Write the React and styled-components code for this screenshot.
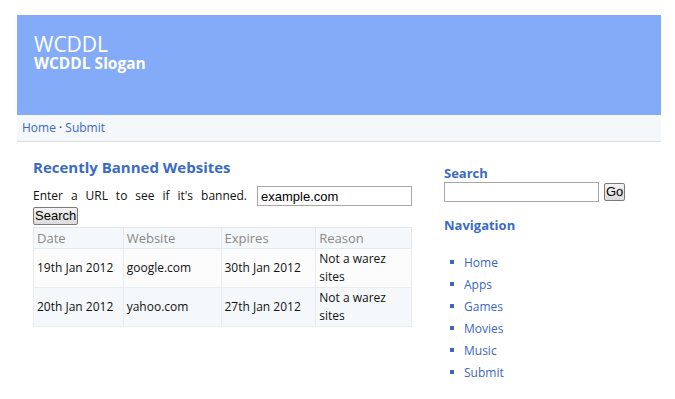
import React from "react";
import styled, { createGlobalStyle } from "styled-components";

const Global = createGlobalStyle`
  html, body { margin: 0; padding: 0; background: #fff; }
  body { font-family: "Open Sans", "DejaVu Sans", sans-serif; color: #111; }
`;

const Page = styled.div`
  width: 644px;
  margin: 15px 0 0 17px;
`;

const Header = styled.header`
  height: 100px;
  box-sizing: border-box;
  background: #84abf7;
  padding: 18px 17px;
  color: #fff;
`;

const Title = styled.h1`
  margin: 0;
  font-size: 21px;
  line-height: 22px;
  font-weight: 400;
`;

const Slogan = styled.h2`
  margin: 0;
  font-size: 15.5px;
  line-height: 17px;
  font-weight: 700;
`;

const TopNav = styled.nav`
  height: 27px;
  box-sizing: border-box;
  background: #f5f8fb;
  border-bottom: 1px solid #dddddd;
  padding: 6px 5px;
  font-size: 12px;
  line-height: 14px;
  color: #222;
`;

const Link = styled.a`
  color: #3a67c2;
  text-decoration: none;
`;

const Content = styled.div`
  display: flex;
  padding: 16px 0 0 16px;
`;

const Main = styled.main`
  width: 379px;
`;

const Side = styled.aside`
  margin-left: 32px;
  width: 190px;
  padding-top: 7px;
`;

const MainTitle = styled.h2`
  margin: 0 0 10px;
  font-size: 15px;
  line-height: 18px;
  font-weight: 700;
  color: #3a6bc4;
`;

const SideTitle = styled.h3`
  margin: 0;
  font-size: 13px;
  line-height: 16px;
  font-weight: 700;
  color: #3a6bc4;
`;

const Form = styled.form`
  font-size: 12px;
  line-height: 20px;
`;

const FormRow = styled.div`
  display: flex;
  align-items: center;
  height: 20px;
`;

const Lead = styled.span`
  flex: 1;
  white-space: nowrap;
  text-align: justify;
  text-align-last: justify;
  margin-right: 10px;
`;

const TextInput = styled.input`
  box-sizing: border-box;
  width: ${(p) => p.$w}px;
  height: 20px;
  border: 1px solid #a7a7a7;
  padding: 0 3px;
  font-family: "Liberation Sans", Arial, sans-serif;
  font-size: 13px;
  color: #000;
  background: #fff;
  outline: none;
`;

const Button = styled.button`
  display: block;
  box-sizing: border-box;
  height: 18px;
  margin-top: ${(p) => p.$mt || 0}px;
  padding: 0 1px;
  font-family: "Liberation Sans", Arial, sans-serif;
  font-size: 13px;
  line-height: 14px;
  color: #000;
  background: linear-gradient(#f2f2f2, #dcdcdc);
  border: 1px solid #7a7a7a;
  border-radius: 2px;
`;

const Table = styled.table`
  margin-top: 2px;
  width: 379px;
  border-collapse: collapse;
  font-size: 12px;
  line-height: 18px;
`;

const Th = styled.th`
  text-align: left;
  font-weight: 400;
  font-size: 13px;
  color: #888;
  background: #f5f8fb;
  border: 1px solid #e3e8ee;
  height: 20px;
  padding: 0 3px;
`;

const Td = styled.td`
  border: 1px solid #e8ecf0;
  padding: 1px 3px;
  height: 37px;
  box-sizing: border-box;
  vertical-align: middle;
`;

const Tr = styled.tr`
  background: ${(p) => (p.$alt ? "#f5f8fb" : "#fcfcfc")};
`;

const SearchRow = styled.div`
  display: flex;
  align-items: center;
  gap: 5px;
  margin: 1px 0 15px;
`;

const NavList = styled.ul`
  margin: 18px 0 0;
  padding: 0 0 0 6px;
  list-style: none;
`;

const NavItem = styled.li`
  display: flex;
  align-items: center;
  height: 22px;
  font-size: 12px;
  &::before {
    content: "";
    width: 4px;
    height: 4px;
    background: #3a67c2;
    margin-right: 10px;
  }
`;

const rows = [
  ["19th Jan 2012", "google.com", "30th Jan 2012", "Not a warez sites"],
  ["20th Jan 2012", "yahoo.com", "27th Jan 2012", "Not a warez sites"],
];

export default function App() {
  return (
    <>
      <Global />
      <Page>
        <Header>
          <Title>WCDDL</Title>
          <Slogan>WCDDL Slogan</Slogan>
        </Header>
        <TopNav>
          <Link href="#">Home</Link> · <Link href="#">Submit</Link>
        </TopNav>
        <Content>
          <Main>
            <MainTitle>Recently Banned Websites</MainTitle>
            <Form>
              <FormRow>
                <Lead>Enter a URL to see if it's banned.</Lead>
                <TextInput $w={155} defaultValue="example.com" />
              </FormRow>
              <Button type="button" $mt={1}>Search</Button>
            </Form>
            <Table>
              <colgroup>
                <col style={{ width: 90 }} />
                <col style={{ width: 98 }} />
                <col style={{ width: 95 }} />
                <col style={{ width: 96 }} />
              </colgroup>
              <thead>
                <tr>
                  <Th>Date</Th>
                  <Th>Website</Th>
                  <Th>Expires</Th>
                  <Th>Reason</Th>
                </tr>
              </thead>
              <tbody>
                {rows.map((r, i) => (
                  <Tr key={i} $alt={i % 2 === 1}>
                    {r.map((c, j) => (
                      <Td key={j}>{c}</Td>
                    ))}
                  </Tr>
                ))}
              </tbody>
            </Table>
          </Main>
          <Side>
            <SideTitle>Search</SideTitle>
            <SearchRow>
              <TextInput $w={155} />
              <Button type="button">Go</Button>
            </SearchRow>
            <SideTitle>Navigation</SideTitle>
            <NavList>
              {["Home", "Apps", "Games", "Movies", "Music", "Submit"].map((n) => (
                <NavItem key={n}>
                  <Link href="#">{n}</Link>
                </NavItem>
              ))}
            </NavList>
          </Side>
        </Content>
      </Page>
    </>
  );
}
